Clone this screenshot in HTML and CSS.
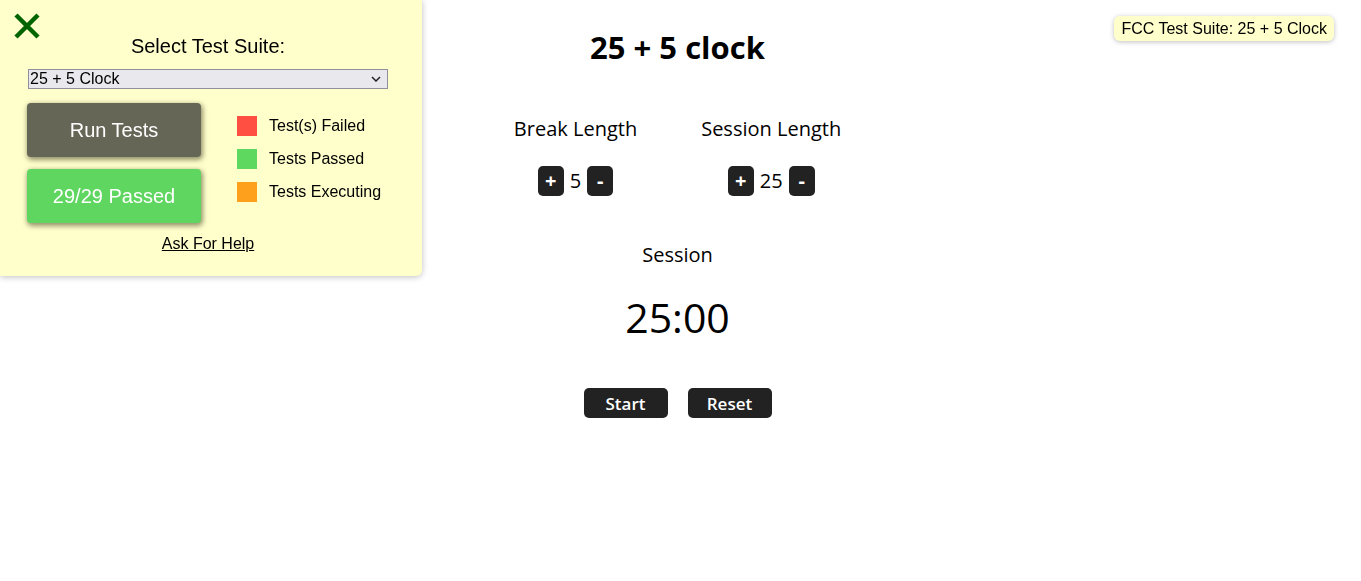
FILE: index.html
```html
<!DOCTYPE html>
<html>
<head>
<meta charset="utf-8">
<link rel="stylesheet" href="styles.css">
</head>
<body>
<main class="clock">
  <h1 class="title">25 + 5 clock</h1>
  <div class="lengths">
    <div class="length">
      <div class="label">Break Length</div>
      <div class="controls">
        <button class="ctl">+</button>
        <span class="val">5</span>
        <button class="ctl">-</button>
      </div>
    </div>
    <div class="length">
      <div class="label">Session Length</div>
      <div class="controls">
        <button class="ctl">+</button>
        <span class="val">25</span>
        <button class="ctl">-</button>
      </div>
    </div>
  </div>
  <div class="timer-label">Session</div>
  <div class="timer">25:00</div>
  <div class="actions">
    <button class="act">Start</button>
    <button class="act">Reset</button>
  </div>
</main>

<aside class="panel">
  <svg class="close" width="28" height="26" viewBox="0 0 28 26"><path d="M3 2 L25 24 M25 2 L3 24" stroke="#006400" stroke-width="4.5" stroke-linecap="butt"/></svg>
  <div class="suite-label">Select Test Suite:</div>
  <div class="select"><span>25 + 5 Clock</span><svg width="10" height="6" viewBox="0 0 10 6"><path d="M1 1 L5 5 L9 1" fill="none" stroke="#222" stroke-width="1.5"/></svg></div>
  <div class="mid">
    <div class="btns">
      <div class="tbtn run">Run Tests</div>
      <div class="tbtn pass">29/29 Passed</div>
    </div>
    <ul class="legend">
      <li><span class="sw red"></span>Test(s) Failed</li>
      <li><span class="sw green"></span>Tests Passed</li>
      <li><span class="sw orange"></span>Tests Executing</li>
    </ul>
  </div>
  <a class="help" href="#">Ask For Help</a>
</aside>

<div class="badge">FCC Test Suite: 25 + 5 Clock</div>
</body>
</html>
```

FILE: styles.css
```css
* { box-sizing: border-box; }
body {
  margin: 0;
  font-family: "Open Sans", "Noto Sans", sans-serif;
  color: #000;
  background: #fff;
}
.clock {
  display: flex;
  flex-direction: column;
  align-items: center;
  padding-top: 26px;
  padding-right: 6px;
}
.title {
  margin: 0;
  font-size: 31px;
  font-weight: 700;
  line-height: 42px;
}
.lengths {
  display: flex;
  gap: 64px;
  margin-top: 46px;
}
.length {
  display: flex;
  flex-direction: column;
  align-items: center;
}
.label {
  font-size: 20px;
  line-height: 30px;
}
.controls {
  display: flex;
  align-items: center;
  gap: 6px;
  margin-top: 22px;
}
.ctl {
  width: 26px;
  height: 30px;
  border: 0;
  border-radius: 5px;
  background: #222;
  color: #fff;
  font-family: inherit;
  font-size: 20px;
  font-weight: 700;
  padding: 0;
  line-height: 30px;
}
.val {
  font-size: 20px;
  line-height: 30px;
}
.timer-label {
  margin-top: 44px;
  font-size: 20px;
  line-height: 30px;
}
.timer {
  margin-top: 23px;
  font-size: 41px;
  line-height: 48px;
}
.actions {
  display: flex;
  gap: 20px;
  margin-top: 47px;
}
.act {
  width: 84px;
  height: 30px;
  border: 0;
  border-radius: 5px;
  background: #222;
  color: #fff;
  font-family: inherit;
  font-size: 17px;
  font-weight: 600;
  padding: 0;
}

.panel {
  position: fixed;
  top: 0;
  left: 0;
  width: 422px;
  height: 276px;
  background: #ffffcc;
  border-radius: 0 0 6px 0;
  box-shadow: 0 1px 6px rgba(0,0,0,0.25);
  font-family: "Liberation Sans", Arial, sans-serif;
  padding: 35px 6px 0 0;
  display: flex;
  flex-direction: column;
  align-items: center;
}
.close {
  position: absolute;
  top: 13px;
  left: 13px;
}
.suite-label {
  font-size: 20px;
  line-height: 22px;
}
.select {
  margin-top: 12px;
  width: 360px;
  height: 20px;
  background: #e9e9ed;
  border: 1px solid #8f8f9d;
  display: flex;
  align-items: center;
  justify-content: space-between;
  padding: 0 6px 0 1px;
  font-size: 16px;
}
.mid {
  display: flex;
  align-self: flex-start;
  margin: 14px 0 0 27px;
  gap: 36px;
}
.btns {
  display: flex;
  flex-direction: column;
  gap: 12px;
}
.tbtn {
  width: 174px;
  height: 54px;
  border-radius: 4px;
  color: #fff;
  font-size: 20px;
  display: flex;
  align-items: center;
  justify-content: center;
  box-shadow: 1px 2px 5px 1px rgba(60,60,30,0.55);
}
.run { background: #666657; }
.pass { background: #5fd65f; }
.legend {
  list-style: none;
  margin: 13px 0 0 0;
  padding: 0;
  display: flex;
  flex-direction: column;
  gap: 13px;
}
.legend li {
  display: flex;
  align-items: center;
  gap: 12px;
  font-size: 16px;
  height: 20px;
}
.sw {
  width: 20px;
  height: 20px;
  display: inline-block;
}
.red { background: #ff4f42; }
.green { background: #5fd85f; }
.orange { background: #ffa01c; }
.help {
  margin-top: 12px;
  color: #000;
  font-size: 16px;
  text-decoration: underline;
}

.badge {
  position: fixed;
  top: 16px;
  right: 27px;
  background: #ffffcc;
  border-radius: 6px;
  box-shadow: 0 1px 5px rgba(0,0,0,0.25);
  padding: 3px 7px;
  font-family: "Liberation Sans", Arial, sans-serif;
  font-size: 16px;
  line-height: 19px;
}
```
